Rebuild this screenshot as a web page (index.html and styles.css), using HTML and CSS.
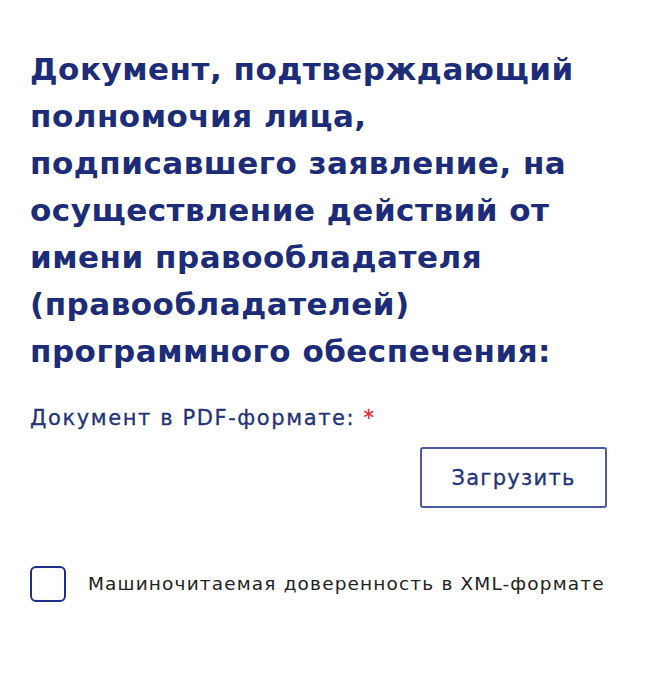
FILE: index.html
```html
<!DOCTYPE html>
<html lang="ru">
<head>
<meta charset="utf-8">
<link rel="stylesheet" href="styles.css">
</head>
<body>
<div class="form">
  <h2 class="title">Документ, подтверждающий полномочия лица, подписавшего заявление, на осуществление действий от имени правообладателя (правообладателей) программного обеспечения:</h2>
  <div class="field-label">Документ в PDF-формате: <span class="req">*</span></div>
  <div class="upload-row">
    <button class="btn-upload" type="button">Загрузить</button>
  </div>
  <label class="check">
    <span class="box"></span>
    <span class="check-text">Машиночитаемая доверенность в XML-формате</span>
  </label>
</div>
</body>
</html>
```
FILE: styles.css
```css
html, body {
  margin: 0;
  padding: 0;
  background: #ffffff;
}
body {
  font-family: "DejaVu Sans", sans-serif;
}
.form {
  width: 577px;
  padding: 46px 0 0 30px;
}
.title {
  margin: 0;
  font-size: 31px;
  line-height: 47px;
  font-weight: 700;
  color: #1c2c78;
  letter-spacing: 0.5px;
  width: 560px;
}
.field-label {
  margin-top: 29px;
  font-size: 21px;
  line-height: 28px;
  font-weight: 400;
  color: #22337a;
  letter-spacing: 1.6px;
  -webkit-text-stroke: 0.3px #22337a;
}
.req {
  color: #e0242b;
  -webkit-text-stroke: 0.3px #e0242b;
}
.upload-row {
  display: flex;
  justify-content: flex-end;
  margin-top: 15px;
}
.btn-upload {
  width: 187px;
  height: 61px;
  border: 2px solid #4a5ba6;
  border-radius: 3px;
  background: #fff;
  font-family: "DejaVu Sans", sans-serif;
  font-size: 21px;
  font-weight: 400;
  letter-spacing: 1.3px;
  color: #22337a;
  -webkit-text-stroke: 0.3px #22337a;
  cursor: pointer;
  padding: 0;
}
.check {
  display: flex;
  align-items: center;
  gap: 22px;
  margin-top: 58px;
}
.box {
  width: 32px;
  height: 32px;
  border: 2.5px solid #1d2f8a;
  border-radius: 6px;
  flex: none;
}
.check-text {
  font-size: 18.5px;
  line-height: 24px;
  color: #222;
  letter-spacing: 1.15px;
  white-space: nowrap;
}
```
